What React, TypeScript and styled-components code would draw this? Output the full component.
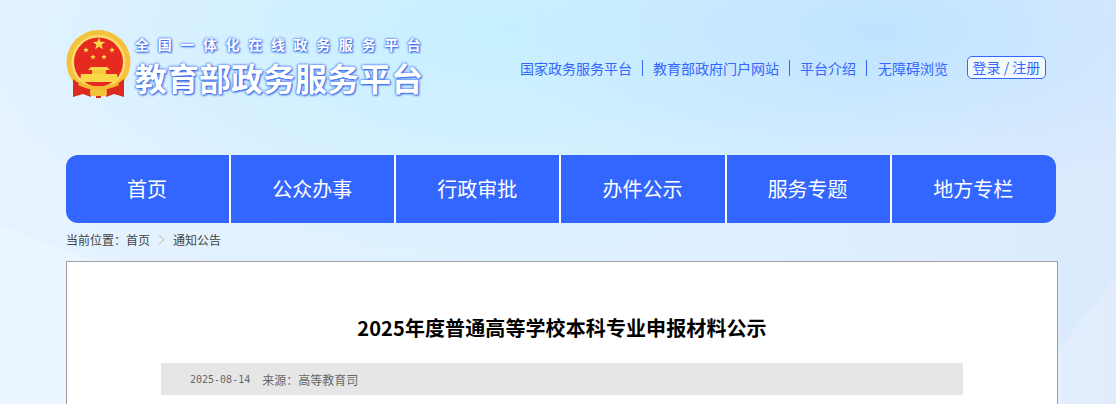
import React from "react";
import styled, { createGlobalStyle } from "styled-components";

const cjk = `"Microsoft YaHei", "Noto Sans CJK SC", sans-serif`;

const GlobalStyle = createGlobalStyle`
  html, body {
    margin: 0;
    height: 100%;
    overflow: hidden;
  }
  body {
    font-family: ${cjk};
    background-color: #e3f0fe;
    background-image:
      linear-gradient(128deg, transparent 0 93%, rgba(255, 255, 255, 0.18) 93% 100%),
      linear-gradient(200deg, transparent 0 78%, rgba(255, 255, 255, 0.22) 78% 100%),
      radial-gradient(ellipse 380px 170px at 880px 30px, #bfe3ff 0%, rgba(191, 227, 255, 0) 100%),
      radial-gradient(ellipse 540px 230px at 500px 30px, #c6f0ff 0%, rgba(198, 240, 255, 0) 100%),
      linear-gradient(90deg, #e6f2ff 0%, #dff1ff 40%, #dfeeff 80%, #dbe9fd 100%);
  }
`;

const Page = styled.div`
  width: 992px;
  margin-left: 66px;
`;

const Header = styled.header`
  box-sizing: border-box;
  height: 155px;
  width: 990px;
  padding-right: 10px;
  display: flex;
  justify-content: space-between;
  align-items: flex-start;
`;

const Brand = styled.div`
  display: flex;
  gap: 4px;
  padding-top: 30px;
`;

const BrandText = styled.div`
  display: flex;
  flex-direction: column;
  padding-top: 6px;
  color: #fff;
  font-weight: 700;
  text-shadow: 0 0 2px #2f62e6, 1px 1px 2px #2f62e6, 0 0 3px #6f95f2;
`;

const BrandSub = styled.div`
  font-size: 14px;
  line-height: 16px;
  letter-spacing: 8.65px;
  white-space: nowrap;
`;

const BrandTitle = styled.div`
  font-size: 32px;
  line-height: 40px;
  margin-top: 5px;
  white-space: nowrap;
`;

const TopLinks = styled.nav`
  display: flex;
  align-items: center;
  padding-top: 56px;
  height: 23px;
`;

const TopLink = styled.a<{ $first?: boolean; $last?: boolean }>`
  color: #3366ff;
  font-size: 14px;
  line-height: 16px;
  padding: 0 10px 0 ${(p) => (p.$last ? "11px" : "10px")};
  white-space: nowrap;
  border-left: ${(p) => (p.$first ? "none" : "1px solid #3366ff")};
`;

const LoginButton = styled.a`
  margin-left: 9px;
  width: 79px;
  height: 23px;
  box-sizing: border-box;
  border: 1px solid #3366ff;
  border-radius: 5px;
  background: rgba(255, 255, 255, 0.75);
  color: #3366ff;
  font-size: 14px;
  line-height: 21px;
  text-align: center;
  white-space: nowrap;
`;

const MainNav = styled.nav`
  width: 990px;
  height: 68px;
  display: flex;
  background: #3366ff;
  border-radius: 12px;
  overflow: hidden;
`;

const NavItem = styled.a`
  flex: 0 0 165.15px;
  display: flex;
  align-items: center;
  justify-content: center;
  color: #fff;
  font-size: 20px;
  box-sizing: border-box;
  padding: 0 1px 2px 0;
  border-right: 2px solid #fff;

  &:last-child {
    flex: 1;
    border-right: none;
  }
`;

const Crumbs = styled.div`
  height: 38px;
  display: flex;
  align-items: center;
  font-size: 12px;
  color: #444;
  padding-bottom: 6px;
  box-sizing: border-box;
`;

const CrumbSep = styled.span`
  display: flex;
  margin: 0 8px;
`;

const Card = styled.main`
  box-sizing: border-box;
  width: 992px;
  min-height: 300px;
  background: #fff;
  border: 1px solid #a0a0a0;
  padding: 51px 94px 0;
`;

const Title = styled.h1`
  margin: 0;
  font-size: 20px;
  line-height: 30px;
  font-weight: 700;
  letter-spacing: 0.1px;
  color: #000;
  text-align: center;
`;

const Meta = styled.div`
  margin-top: 20px;
  height: 32px;
  background: #e6e6e6;
  display: flex;
  align-items: center;
  padding-left: 29px;
  gap: 12px;
  font-size: 12px;
  color: #666;
`;

const MetaDate = styled.span`
  font-family: "DejaVu Sans Mono", "Liberation Mono", monospace;
  font-size: 10px;
`;

function Emblem() {
  const stars: [number, number, number][] = [
    [33, 14, 6.5],
    [20, 20, 3],
    [46, 20, 3],
    [27, 27, 3],
    [38, 27, 3],
  ];
  const starPoints = (cx: number, cy: number, r: number) =>
    Array.from({ length: 10 }, (_, i) => {
      const a = (-90 + i * 36) * (Math.PI / 180);
      const rr = i % 2 ? r * 0.42 : r;
      return `${cx + rr * Math.cos(a)},${cy + rr * Math.sin(a)}`;
    }).join(" ");
  return (
    <svg width="65" height="68" viewBox="0 0 65 68" style={{ flex: "none" }}>
      <circle cx="32.5" cy="32" r="32" fill="#f5c23c" />
      <circle cx="32.5" cy="32" r="27" fill="#fbdc6e" />
      <circle cx="32.5" cy="32" r="24.5" fill="#e62a20" />
      {stars.map(([x, y, r]) => (
        <polygon key={`${x}-${y}`} points={starPoints(x, y, r)} fill="#fbd84a" />
      ))}
      <path d="M25 37 L41 37 L44 40 L22 40 Z" fill="#fbd84a" />
      <rect x="26" y="40" width="14" height="4" fill="#f6c93e" />
      <path d="M15 44 L51 44 L52 52 L14 52 Z" fill="#fbd84a" />
      <path d="M7 49 Q15 56 24 57 L25 67 L17 64 L7 67 Z" fill="#dc2a1f" />
      <path d="M58 49 Q50 56 41 57 L40 67 L48 64 L58 67 Z" fill="#dc2a1f" />
      <path d="M14 52 Q32 61 52 52 L53 55 Q32 65 12 55 Z" fill="#f2bb30" />
      <rect x="24" y="60" width="17" height="6" rx="3" fill="#f5c23c" />
      <rect x="30" y="66" width="5" height="2" fill="#dc2a1f" />
    </svg>
  );
}

export default function App() {
  const links = ["国家政务服务平台", "教育部政府门户网站", "平台介绍", "无障碍浏览"];
  const navs = ["首页", "公众办事", "行政审批", "办件公示", "服务专题", "地方专栏"];
  return (
    <>
      <GlobalStyle />
      <Page>
        <Header>
          <Brand>
            <Emblem />
            <BrandText>
              <BrandSub>全国一体化在线政务服务平台</BrandSub>
              <BrandTitle>教育部政务服务平台</BrandTitle>
            </BrandText>
          </Brand>
          <TopLinks>
            {links.map((link, i) => (
              <TopLink key={link} $first={i === 0} $last={i === links.length - 1}>
                {link}
              </TopLink>
            ))}
            <LoginButton>登录 / 注册</LoginButton>
          </TopLinks>
        </Header>
        <MainNav>
          {navs.map((nav) => (
            <NavItem key={nav}>{nav}</NavItem>
          ))}
        </MainNav>
        <Crumbs>
          当前位置：首页
          <CrumbSep>
            <svg width="7" height="11" viewBox="0 0 7 11">
              <path d="M1 1 L6 5.5 L1 10" fill="none" stroke="#c8ccd2" strokeWidth="1.2" />
            </svg>
          </CrumbSep>
          通知公告
        </Crumbs>
        <Card>
          <Title>2025年度普通高等学校本科专业申报材料公示</Title>
          <Meta>
            <MetaDate>2025-08-14</MetaDate>
            <span>来源：高等教育司</span>
          </Meta>
        </Card>
      </Page>
    </>
  );
}
